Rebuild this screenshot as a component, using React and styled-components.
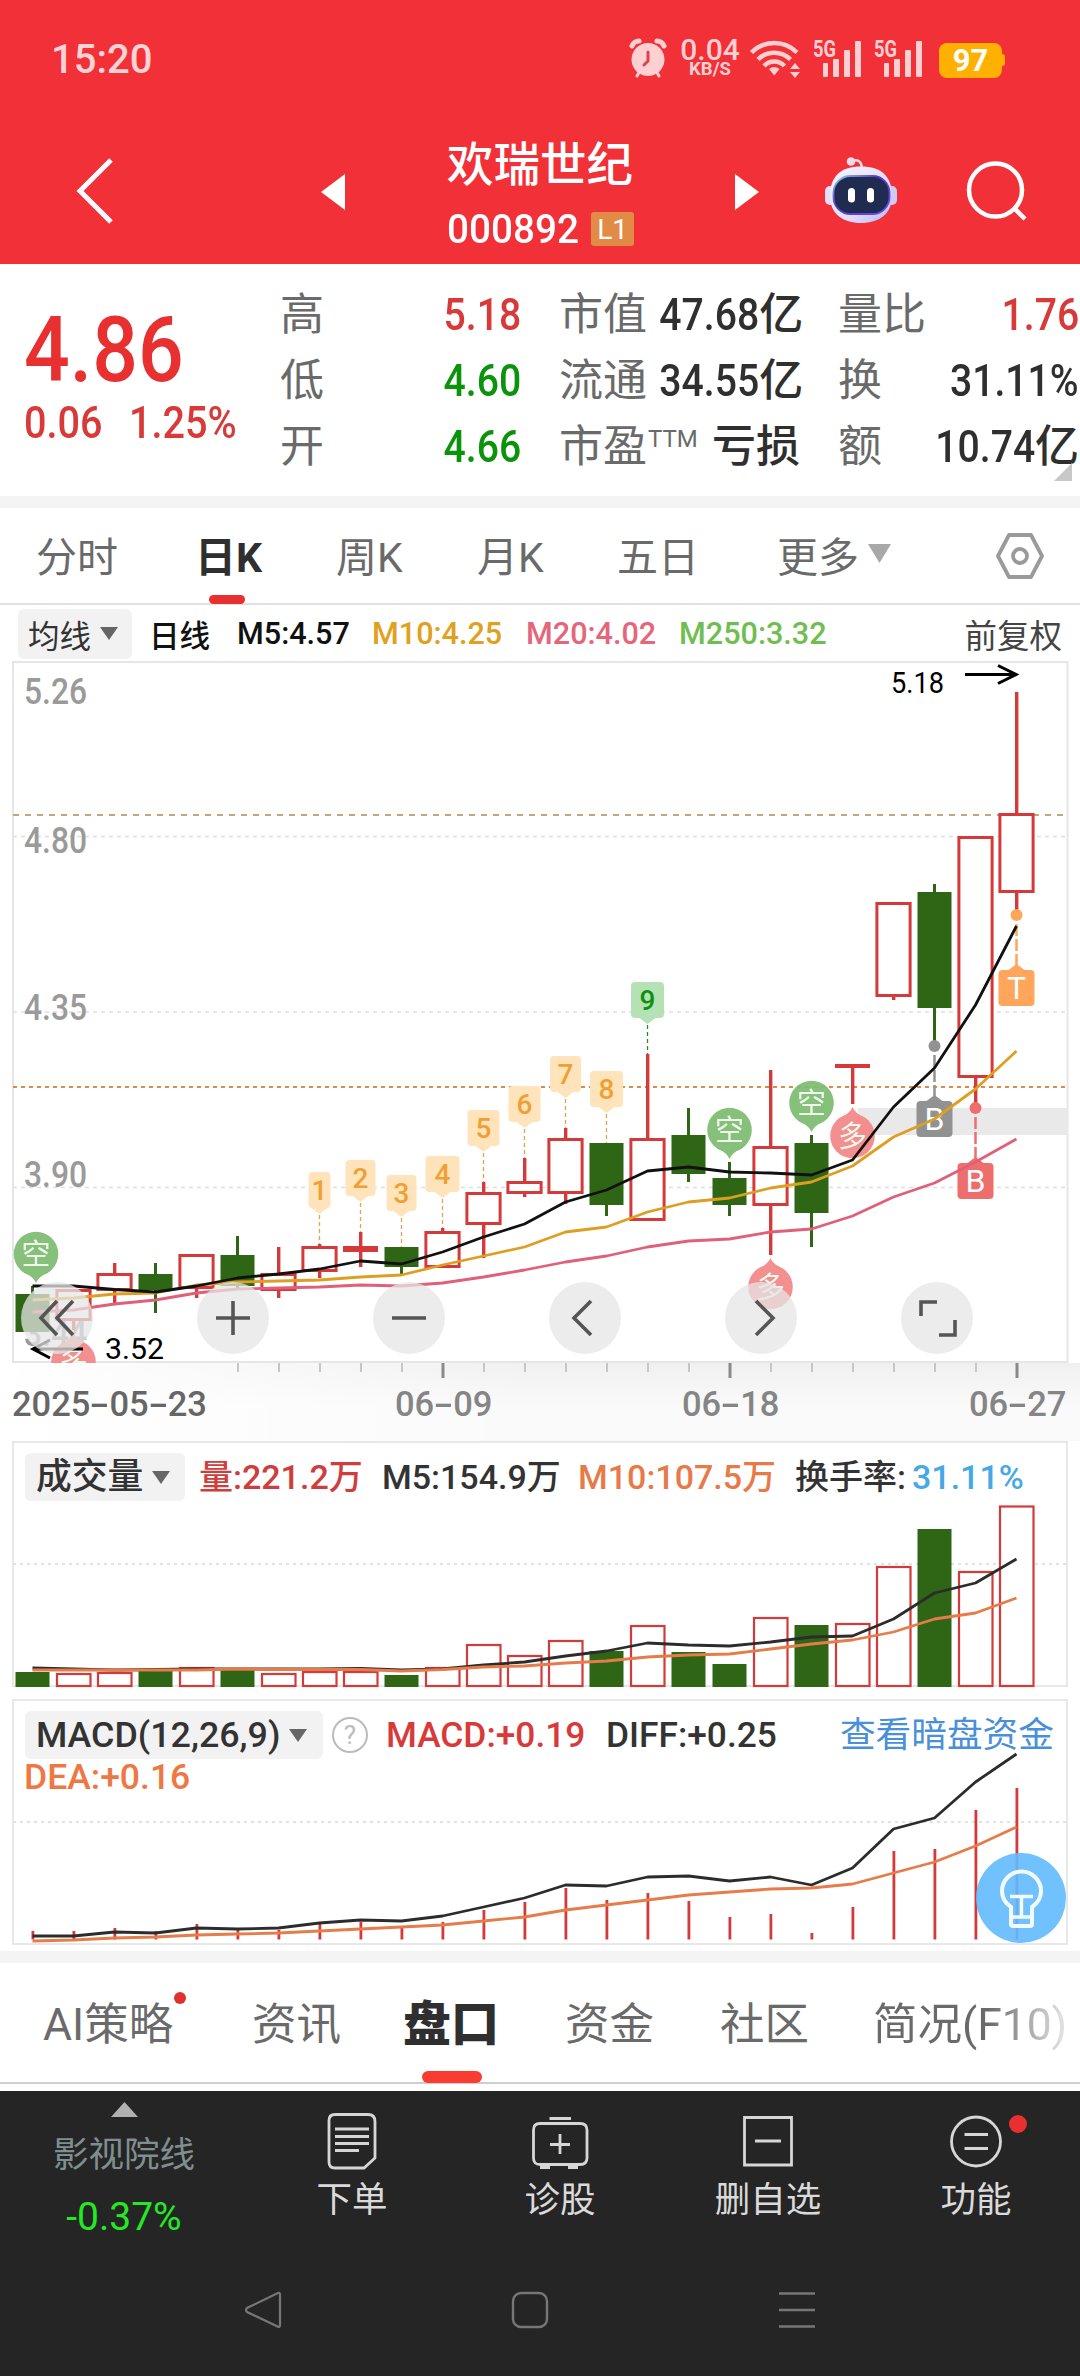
import React from 'react';
import styled, { createGlobalStyle } from 'styled-components';

const RED = '#d43a3a';
const GREEN = '#2f6615';

// x centre of the nth trading day, shared by the three charts
const dayX = i => 32.5 + 41 * i;

const toPoints = ys => ys.map((y, i) => `${dayX(i)},${y}`).join(' ');

// [up, high, top, bottom, low]
const candles = [
  [0, 1286, 1294, 1332, 1332],
  [1, 1289, 1289, 1321, 1330],
  [1, 1263, 1273, 1291, 1304],
  [0, 1263, 1274, 1290, 1313],
  [1, 1254, 1254, 1289, 1298],
  [0, 1236, 1255, 1286, 1288],
  [1, 1247, 1273, 1291, 1298],
  [1, 1244, 1246, 1272, 1278],
  [1, 1232, 1246, 1252, 1267],
  [0, 1247, 1247, 1267, 1274],
  [1, 1228, 1231, 1268, 1268],
  [1, 1182, 1192, 1225, 1258],
  [1, 1158, 1181, 1194, 1197],
  [1, 1128, 1138, 1194, 1204],
  [0, 1143, 1143, 1205, 1216],
  [1, 1054, 1138, 1221, 1221],
  [0, 1108, 1135, 1174, 1182],
  [0, 1162, 1178, 1205, 1216],
  [1, 1070, 1146, 1206, 1255],
  [0, 1135, 1143, 1213, 1247],
  [1, 1064, 1064, 1068, 1104],
  [1, 902, 902, 997, 1000],
  [0, 884, 892, 1008, 1046],
  [1, 836, 836, 1078, 1108],
  [1, 692, 813, 893, 915],
];

const ma5 = [1286, 1286, 1289.5, 1292, 1286, 1278, 1274, 1269, 1261, 1264, 1252, 1237, 1224, 1202, 1190, 1171, 1167, 1172, 1173, 1175, 1160, 1107, 1068, 1005, 926];
const ma10 = [1300, 1298, 1294, 1293, 1285, 1282, 1281, 1280, 1277, 1275, 1265, 1256, 1247, 1232, 1227, 1212, 1202, 1198, 1188, 1182, 1166, 1137, 1119, 1089, 1051];
const ma20 = [1312, 1310, 1304, 1300, 1293, 1289, 1288, 1287, 1285, 1286, 1283, 1277, 1270, 1262, 1256, 1247, 1241, 1239, 1232, 1229, 1216, 1197, 1183, 1162, 1139];

const volumes = [1672, 1673, 1672, 1671, 1667, 1670, 1673, 1671, 1671, 1675, 1667, 1644, 1655, 1640, 1651, 1625, 1652, 1664, 1617, 1625, 1623, 1566, 1529, 1571, 1505.5];
const volMa5 = [1668, 1669, 1670, 1669.5, 1669, 1669, 1669, 1669, 1668.5, 1670, 1669, 1665, 1662, 1656, 1651, 1643, 1645, 1646, 1642, 1637, 1636, 1619, 1593, 1583, 1559];
const volMa10 = [1670, 1670, 1670, 1670, 1670, 1669, 1669.5, 1669.5, 1669.5, 1671, 1669.5, 1667, 1666, 1663, 1661, 1657, 1655, 1654, 1649, 1644, 1640, 1632, 1619, 1613, 1598];

const macdBars = [1931, 1931, 1928, 1931, 1924, 1929, 1930, 1924, 1922, 1927, 1922, 1910, 1902, 1888, 1900, 1893, 1901, 1917, 1914, 1933, 1907, 1851, 1849, 1810, 1788];
const diffLine = [1936, 1936, 1932, 1933, 1928, 1929, 1928, 1923, 1920, 1921, 1916, 1907, 1898, 1885, 1886, 1877, 1876, 1881, 1877, 1885, 1868, 1829, 1818, 1782, 1754];
const deaLine = [1941, 1940, 1938, 1937, 1935, 1934, 1933, 1931, 1929, 1927, 1925, 1921, 1917, 1910, 1905, 1900, 1895, 1892, 1889, 1888, 1884, 1873, 1862, 1846, 1827];

// [day, label, box top, box width, line end]
const counts = [
  [7, '1', 1172, 22, 1244],
  [8, '2', 1160, 30, 1232],
  [9, '3', 1175, 30, 1247],
  [10, '4', 1156, 34, 1228],
  [11, '5', 1110, 32, 1182],
  [12, '6', 1086, 32, 1158],
  [13, '7', 1056, 31, 1128],
  [14, '8', 1071, 33, 1143],
  [15, '9', 982, 33, 1054],
];

const axisLabels = [
  ['5.26', 704],
  ['4.80', 853],
  ['4.35', 1020],
  ['3.90', 1187],
  ['3.44', 1346],
];

const quotes = [
  [
    { label: '高', value: '5.18', color: '#d83a3a' },
    { label: '低', value: '4.60', color: '#0b930b' },
    { label: '开', value: '4.66', color: '#0b930b' },
  ],
  [
    { label: '市值', value: '47.68', unit: '亿' },
    { label: '流通', value: '34.55', unit: '亿' },
    { label: '市盈', sup: 'TTM', unit: '亏损' },
  ],
  [
    { label: '量比', value: '1.76', color: '#d83a3a' },
    { label: '换', value: '31.11%' },
    { label: '额', value: '10.74', unit: '亿' },
  ],
];

const App = () => {
  return (
    <>
      <GlobalStyle />
      <Page>
        <Header>
          <StatusBar />
          <TitleBar />
        </Header>
        <QuoteBoard />
        <Band />
        <PeriodTabs />
        <AverageBar />
        <CandleSection />
        <DateAxis />
        <VolumePanel />
        <MacdPanel />
        <Band />
        <InfoTabs />
        <Dock />
        <SystemNav />
      </Page>
    </>
  );
};

export default App;

const Signal = () => (
  <svg width="48" height="40" viewBox="0 0 48 40">
    <SvgText x="0" y="18.5" size="23" weight="700" fill="#ffcfd1" textLength="23" lengthAdjust="spacingAndGlyphs">
      5G
    </SvgText>
    <g fill="#ffcfd1">
      <rect x="10" y="25" width="5" height="14" rx="1" />
      <rect x="20" y="21" width="6" height="18" rx="1" />
      <rect x="31" y="12" width="6" height="27" rx="1" />
      <rect x="42" y="3" width="6" height="36" rx="1" />
    </g>
  </svg>
);

const StatusBar = () => (
  <StatusWrap>
    <Clock>15:20</Clock>
    <StatusIcons>
      <svg width="38" height="40" viewBox="0 0 38 40">
        <g fill="none" stroke="#ffcfd1" strokeLinecap="round">
          <path d="M3 8 Q5 3 10 3" strokeWidth="5" />
          <path d="M35 8 Q33 3 28 3" strokeWidth="5" />
          <path d="M11 33 L8 38 M27 33 L30 38" strokeWidth="3" />
        </g>
        <circle cx="19" cy="21.5" r="16.5" fill="#ffcfd1" />
        <path d="M19 14 V23 L15 27" fill="none" stroke="#d8474d" strokeWidth="3" strokeLinecap="round" />
      </svg>
      <Rate>
        <RateValue>0.04</RateValue>
        <RateUnit>KB/S</RateUnit>
      </Rate>
      <Wifi width="52" height="40" viewBox="0 0 52 40">
        <g fill="none" stroke="#ffcfd1" strokeWidth="4.5">
          <path d="M1.5 14.5 A32 32 0 0 1 47 14.5" />
          <path d="M8 21.5 A23 23 0 0 1 40.5 21.5" />
          <path d="M14 28 A14 14 0 0 1 34.5 28" />
        </g>
        <path d="M19 31 Q24.2 27 29.5 31 L24.2 37.5 Z" fill="#ffcfd1" />
        <path d="M40 31 L45 25 L50 31 Z M40 34 L45 40 L50 34 Z" fill="#ffcfd1" />
      </Wifi>
      <Signal />
      <Signal />
      <Battery>97</Battery>
    </StatusIcons>
  </StatusWrap>
);

const TitleBar = () => (
  <TitleWrap>
    <svg width="40" height="66" viewBox="0 0 40 66">
      <path d="M35 2 L4 33 L35 64" fill="none" stroke="#fff" strokeWidth="5" />
    </svg>
    <Prev width="24" height="36" viewBox="0 0 24 36">
      <path d="M24 0 V36 L0 18 Z" fill="#fff" />
    </Prev>
    <StockTitle>
      <StockName>欢瑞世纪</StockName>
      <StockCode>
        <Narrow scale="0.955">000892</Narrow>
        <Level>L1</Level>
      </StockCode>
    </StockTitle>
    <Next width="24" height="36" viewBox="0 0 24 36">
      <path d="M0 0 V36 L24 18 Z" fill="#fff" />
    </Next>
    <Robot />
    <svg width="62" height="62" viewBox="0 0 62 62">
      <g fill="none" stroke="#fff" strokeWidth="4.5">
        <circle cx="29.5" cy="30" r="26.5" />
        <path d="M48 48 L59 59" />
      </g>
    </svg>
  </TitleWrap>
);

const Robot = () => (
  <RobotSvg width="72" height="68" viewBox="0 0 72 68">
    <defs>
      <linearGradient id="shell" x1="0" y1="0" x2="1" y2="1">
        <stop offset="0" stopColor="#f6f4ff" />
        <stop offset="0.6" stopColor="#e3defa" />
        <stop offset="1" stopColor="#b9b6ee" />
      </linearGradient>
      <linearGradient id="visor" x1="0" y1="0" x2="1" y2="1">
        <stop offset="0" stopColor="#8fd4e8" />
        <stop offset="0.4" stopColor="#5a36c8" />
        <stop offset="1" stopColor="#6b4be8" />
      </linearGradient>
    </defs>
    <path d="M27 5 Q36 2 37 12" fill="none" stroke="#f0dcea" strokeWidth="2.5" />
    <circle cx="26" cy="5.5" r="4.3" fill="#f3dbe6" />
    <rect x="0" y="30" width="10" height="19" rx="5" fill="#e4e0fa" />
    <rect x="62" y="30" width="10" height="19" rx="5" fill="#cfc9f5" />
    <path d="M36 10.5 C56 10.5 67 20 67 40 C67 58 54 67 36 67 C18 67 5 58 5 40 C5 20 16 10.5 36 10.5 Z" fill="url(#shell)" />
    <rect x="8.5" y="20" width="56" height="38" rx="17" fill="#1f2c50" stroke="url(#visor)" strokeWidth="1.8" />
    <rect x="23" y="32" width="7" height="14.5" rx="3.5" fill="#fff" />
    <rect x="42" y="32" width="7" height="14.5" rx="3.5" fill="#fff" />
  </RobotSvg>
);

const QuoteBoard = () => (
  <QuoteWrap>
    <PriceBox>
      <Price>
        <Narrow scale="0.885">4.86</Narrow>
      </Price>
      <Change>
        <ChangeValue>0.06</ChangeValue>
        <ChangeValue>1.25%</ChangeValue>
      </Change>
    </PriceBox>
    {quotes.map((col, i) => (
      <QuoteCol key={i}>
        {col.map(q => (
          <QuoteRow key={q.label}>
            <QuoteLabel>
              {q.label}
              {q.sup && <Sup>{q.sup}</Sup>}
            </QuoteLabel>
            <QuoteValue color={q.color}>
              {q.value && (
                <Narrow scale="0.89" origin="right">
                  {q.value}
                </Narrow>
              )}
              {q.unit}
            </QuoteValue>
          </QuoteRow>
        ))}
      </QuoteCol>
    ))}
    <Corner />
  </QuoteWrap>
);

const PeriodTabs = () => (
  <PeriodWrap>
    <Period>分时</Period>
    <Period active>日K</Period>
    <Period>周K</Period>
    <Period>月K</Period>
    <Period>五日</Period>
    <Period>
      更多
      <Caret width="23" height="19" viewBox="0 0 22 18">
        <path d="M0 0 H22 L11 18 Z" fill="#a8a8a8" />
      </Caret>
    </Period>
    <svg width="50" height="48" viewBox="0 0 50 48">
      <g fill="none" stroke="#9a9a9a" strokeWidth="3.8" strokeLinejoin="round">
        <path d="M3 24 L14 3 H36 L47 24 L36 45 H14 Z" />
        <circle cx="25" cy="24" r="7" />
      </g>
    </svg>
  </PeriodWrap>
);

const DownMark = () => (
  <Caret width="18" height="13" viewBox="0 0 18 13">
    <path d="M0 0 H18 L9 13 Z" fill="#666" />
  </Caret>
);

const AverageBar = () => (
  <AverageWrap>
    <AverageChip>
      均线
      <DownMark />
    </AverageChip>
    <Average width="88px" color="#111">日线</Average>
    <Average width="135px" color="#111">M5:4.57</Average>
    <Average width="154px" color="#e0a020">M10:4.25</Average>
    <Average width="153px" color="#e5667a">M20:4.02</Average>
    <Average width="144px" color="#6fbe50">M250:3.32</Average>
    <Adjust>前复权</Adjust>
  </AverageWrap>
);

const CountTag = ({ data }) => {
  const [day, label, top, w, end] = data;
  const x = dayX(day);
  const done = label === '9';
  const bottom = top + 36;
  return (
    <g>
      <line x1={x} x2={x} y1={bottom + 7} y2={end} stroke={done ? '#2a8a2a' : '#d9a84e'} strokeWidth="1.3" strokeDasharray="4 3" />
      <rect x={x - w / 2} y={top} width={w} height="36" rx="4" fill={done ? '#b5e2b5' : '#ffe3bb'} />
      <path d={`M${x - 8} ${bottom} H${x + 8} L${x} ${bottom + 6} Z`} fill={done ? '#b5e2b5' : '#ffe3bb'} />
      <SvgText x={x} y={top + 28} size="28" weight="500" anchor="middle" fill={done ? '#109010' : '#f0a032'}>
        {label}
      </SvgText>
    </g>
  );
};

const Bubble = ({ x, y, short }) => {
  const color = short ? '#80bd73' : '#f48a8a';
  const tip = short ? y + 29 : y - 29;
  const base = short ? y + 18 : y - 18;
  return (
    <g opacity="0.95">
      <circle cx={x} cy={y} r="22.3" fill={color} />
      <path d={`M${x - 12} ${base} Q${x - 2} ${(base + tip) / 2} ${x} ${tip} Q${x + 2} ${(base + tip) / 2} ${x + 12} ${base} Z`} fill={color} />
      <SvgText x={x} y={y + 11} size="29" anchor="middle" fill="#eef8ec">
        {short ? '空' : '多'}
      </SvgText>
    </g>
  );
};

const TradeMark = ({ x, from, top, label, color }) => (
  <g>
    <circle cx={x} cy={from} r="6" fill={color} />
    <line x1={x} x2={x} y1={from + 9} y2={top - 5} stroke={color} strokeWidth="2.5" strokeDasharray="12 3" />
    <rect x={x - 18} y={top} width="36" height="36" rx="4" fill={color} />
    <path d={`M${x - 8} ${top} H${x + 8} L${x} ${top - 6} Z`} fill={color} />
    <SvgText x={x} y={top + 29} size="32" anchor="middle" fill="#fff">
      {label}
    </SvgText>
  </g>
);

const Candle = ({ data, day }) => {
  const [up, high, top, bottom, low] = data;
  const x = dayX(day);
  const flat = bottom - top < 8;
  if (!up) {
    return (
      <g fill={GREEN}>
        <rect x={x - 1.5} y={high} width="3" height={low - high} />
        <rect x={x - 17} y={top} width="34" height={bottom - top} />
      </g>
    );
  }
  return (
    <g>
      <rect x={x - 1.5} y={high} width="3.4" height={top - high} fill={RED} />
      <rect x={x - 1.5} y={bottom} width="3.4" height={low - bottom} fill={RED} />
      {flat ? (
        <rect x={x - 17.5} y={top} width="35" height={bottom - top} fill={RED} />
      ) : (
        <rect x={x - 16.6} y={top + 1.5} width="33.2" height={bottom - top - 3} fill="#fff" stroke={RED} strokeWidth="3" />
      )}
    </g>
  );
};

const CandleSection = () => (
  <CandleWrap>
    <CandleSvg width="1080" height="705" viewBox="0 659 1080 705">
      <defs>
        <clipPath id="frame">
          <rect x="12" y="661" width="1057" height="702" />
        </clipPath>
      </defs>
      <rect x="13" y="662" width="1054.5" height="700" fill="#fff" stroke="#e6e6e6" strokeWidth="2" />
      <g clipPath="url(#frame)">
        <g stroke="#dedede" strokeWidth="1.3" strokeDasharray="4 4">
          <line x1="13" x2="1067" y1="836.5" y2="836.5" />
          <line x1="13" x2="1067" y1="1012" y2="1012" />
          <line x1="13" x2="1067" y1="1187.5" y2="1187.5" />
        </g>
        <rect x="858" y="1108" width="210" height="27" fill="#e9e9e9" />
        {axisLabels.map(([text, y]) => (
          <SvgText key={text} x="24" y={y} size="36" weight="500" fill="#9a9a9a" textLength="63" lengthAdjust="spacingAndGlyphs">
            {text}
          </SvgText>
        ))}
        <line x1="13" x2="1067" y1="815" y2="815" stroke="#bfa878" strokeWidth="2" strokeDasharray="6 6" />
        <line x1="13" x2="1067" y1="1087" y2="1087" stroke="#d98c4a" strokeWidth="2.2" strokeDasharray="4 4" />
        {candles.map((c, i) => (
          <Candle key={i} data={c} day={i} />
        ))}
        {counts.map(c => (
          <CountTag key={c[1]} data={c} />
        ))}
        <Bubble x={36} y={1254} short />
        <Bubble x={dayX(17)} y={1130} short />
        <Bubble x={dayX(19)} y={1103} short />
        <Bubble x={dayX(20)} y={1136} />
        <Bubble x={dayX(18)} y={1287} />
        <Bubble x={73.5} y={1362} />
        <TradeMark x={dayX(22)} from={1046} top={1101} label="B" color="#929292" />
        <TradeMark x={dayX(23)} from={1108} top={1163} label="B" color="#ee6e6e" />
        <TradeMark x={dayX(24)} from={915} top={970} label="T" color="#ffa55c" />
        <g fill="none" strokeWidth="2.8" strokeLinejoin="round">
          <polyline points={toPoints(ma20)} stroke="#e0607a" />
          <polyline points={toPoints(ma10)} stroke="#dd9f22" />
          <polyline points={toPoints(ma5)} stroke="#111" />
        </g>
        <g fill="none" stroke="#000" strokeWidth="3">
          <path d="M965 674.5 H1016 M998 665.5 L1016 674.5 L998 683.5" />
          <path d="M83 1349 H33 M50 1340 L33 1349 L50 1358" />
        </g>
        <SvgText x="891" y="693" size="30" fill="#000" textLength="53" lengthAdjust="spacingAndGlyphs">
          5.18
        </SvgText>
        <SvgText x="105" y="1359" size="30" fill="#000" textLength="59" lengthAdjust="spacingAndGlyphs">
          3.52
        </SvgText>
      </g>
    </CandleSvg>
    <Controls>
      <ControlButton>
        <path d="M36 19 L20 36 L36 53 M52 19 L36 36 L52 53" />
      </ControlButton>
      <ControlButton>
        <path d="M19 36 H53 M36 19 V53" />
      </ControlButton>
      <ControlButton>
        <path d="M19 36 H53" />
      </ControlButton>
      <ControlButton>
        <path d="M42 19 L25 36 L42 53" />
      </ControlButton>
      <ControlButton>
        <path d="M31 19 L48 36 L31 53" />
      </ControlButton>
      <ControlButton>
        <path d="M20 34 V20 H36 M54 38 V53 H38" />
      </ControlButton>
    </Controls>
  </CandleWrap>
);

const ControlButton = ({ children }) => (
  <Round>
    <svg width="72" height="72" viewBox="0 0 72 72" fill="none" stroke="#555" strokeWidth="3.6">
      {children}
    </svg>
  </Round>
);

const DateText = ({ children }) => (
  <>
    {children.split('-').map((part, i) => (
      <React.Fragment key={i}>
        {i > 0 && <Dash>-</Dash>}
        {part}
      </React.Fragment>
    ))}
  </>
);

const DateAxis = () => (
  <AxisWrap>
    <svg width="1080" height="18" viewBox="0 1363 1080 18">
      {candles.map((c, i) => {
        if (i < 5) return null;
        const major = i === 10 || i === 17 || i === 24;
        return <rect key={i} x={dayX(i) - (major ? 1 : 0.5)} y="1363" width={major ? 3 : 2} height={major ? 15 : 9} fill={major ? '#8a8a8a' : '#c6c6c6'} />;
      })}
    </svg>
    <Dates>
      <DateLabel width="383px" dark>
        <DateText>2025-05-23</DateText>
      </DateLabel>
      <DateLabel width="287px">
        <DateText>06-09</DateText>
      </DateLabel>
      <DateLabel width="287px">
        <DateText>06-18</DateText>
      </DateLabel>
      <DateLabel>
        <DateText>06-27</DateText>
      </DateLabel>
    </Dates>
  </AxisWrap>
);

const VolumePanel = () => (
  <Panel height="246px">
    <PanelHead size="34px">
      <Chip width="160px">
        成交量
        <DownMark />
      </Chip>
      <Figure width="183px" left="14px" color="#cf3d3d">量:221.2万</Figure>
      <Figure width="196px" color="#333">M5:154.9万</Figure>
      <Figure width="217px" color="#e67a48">M10:107.5万</Figure>
      <Figure width="117px" color="#333">换手率:</Figure>
      <Figure color="#46a9e6">31.11%</Figure>
    </PanelHead>
    <PanelSvg width="1080" height="246" viewBox="0 1441 1080 246">
      <line x1="13" x2="1067" y1="1564" y2="1564" stroke="#e2e2e2" strokeWidth="2" strokeDasharray="3 4" />
      {volumes.map((top, i) =>
        candles[i][0] ? (
          <rect key={i} x={dayX(i) - 16.5} y={top + 1} width="33.5" height={1686 - top - 1} fill="#fff" stroke={RED} strokeWidth="2.2" />
        ) : (
          <rect key={i} x={dayX(i) - 17} y={top} width="34" height={1687 - top} fill={GREEN} />
        )
      )}
      <g fill="none" strokeWidth="2.8" strokeLinejoin="round">
        <polyline points={toPoints(volMa5)} stroke="#2c2c2c" />
        <polyline points={toPoints(volMa10)} stroke="#e67c4a" />
      </g>
    </PanelSvg>
  </Panel>
);

const MacdPanel = () => (
  <Panel height="246px" top="12px" bottom="6px">
    <PanelHead size="35.3px">
      <Chip width="298px">
        MACD(12,26,9)
        <DownMark />
      </Chip>
      <Help>?</Help>
      <Figure width="220px" left="18px" color="#d83a3a">MACD:+0.19</Figure>
      <Figure color="#333">DIFF:+0.25</Figure>
      <DarkPool>查看暗盘资金</DarkPool>
    </PanelHead>
    <Dea>DEA:+0.16</Dea>
    <PanelSvg width="1080" height="246" viewBox="0 1699 1080 246">
      <line x1="13" x2="1067" y1="1822" y2="1822" stroke="#e2e2e2" strokeWidth="2" strokeDasharray="3 4" />
      {macdBars.map((top, i) => (
        <rect key={i} x={dayX(i) - 1} y={top} width="2.8" height={1939.5 - top} fill={RED} />
      ))}
      <g fill="none" strokeWidth="2.8" strokeLinejoin="round">
        <polyline points={toPoints(diffLine)} stroke="#2c2c2c" />
        <polyline points={toPoints(deaLine)} stroke="#e67c4a" />
      </g>
    </PanelSvg>
    <Bulb width="90" height="90" viewBox="0 0 90 90">
      <circle cx="45" cy="45" r="45" fill="#62baff" opacity="0.9" />
      <g fill="none" stroke="#f2fbff" strokeWidth="4" strokeLinejoin="round">
        <path d="M35 71 V54 Q26 48 26 38 A19.5 19.5 0 0 1 65 38 Q65 48 56 54 V71 Q56 73 54 73 H37 Q35 73 35 71 Z" />
        <path d="M34 43.5 H57 M45.5 43.5 V64 M35 64 H56" strokeWidth="3.4" />
      </g>
    </Bulb>
  </Panel>
);

const InfoTabs = () => (
  <InfoWrap>
    <Info width="209px">
      AI策略
      <TabDot />
    </Info>
    <Info width="151px">资讯</Info>
    <Info width="162px" active>盘口</Info>
    <Info width="155px">资金</Info>
    <Info width="153px">社区</Info>
    <FadedInfo>简况(F10)</FadedInfo>
  </InfoWrap>
);

const Dock = () => (
  <DockWrap>
    <Sector>
      <svg width="27" height="15" viewBox="0 0 27 15">
        <path d="M0 15 L13.5 0 L27 15 Z" fill="#b0b0b0" />
      </svg>
      <SectorName>影视院线</SectorName>
      <SectorChange>-0.37%</SectorChange>
    </Sector>
    <DockItem>
      <DockIcon>
        <path d="M11 2.5 H44 Q51 2.5 51 9.5 V46 L40 56 H11 Q5 56 5 50 V8.5 Q5 2.5 11 2.5 Z M11 17 H45 M11 24.5 H45 M11 31.5 H45 M11 38.5 H35" />
      </DockIcon>
      下单
    </DockItem>
    <DockItem>
      <DockIcon>
        <path d="M8 11.5 H48 Q55 11.5 55 18 V46 Q55 52.5 48 52.5 H8 Q1.5 52.5 1.5 46 V18 Q1.5 11.5 8 11.5 Z M17.5 6.5 H39 M28 22 V42 M18 32.5 H38" />
        <path d="M8 55 H18 M36 55 H46" strokeWidth="4" />
      </DockIcon>
      诊股
    </DockItem>
    <DockItem>
      <DockIcon>
        <path d="M4.5 5.5 H51.5 V53 H4.5 Z M15 29 H41" />
      </DockIcon>
      删自选
    </DockItem>
    <DockItem>
      <DockIcon>
        <circle cx="28" cy="29.5" r="24.5" />
        <path d="M16.5 22.5 H40 M16.5 36.5 H40" />
      </DockIcon>
      功能
      <DockDot />
    </DockItem>
  </DockWrap>
);

const SystemNav = () => (
  <NavWrap>
    <svg width="40" height="40" viewBox="0 0 40 40">
      <path d="M35 3 Q37 2 37 5 V35 Q37 38 34.5 36.5 L4 22 Q2 20 4 18 Z" fill="none" stroke="#777" strokeWidth="2.2" />
    </svg>
    <svg width="40" height="40" viewBox="0 0 40 40">
      <rect x="3" y="3" width="34" height="34" rx="8" fill="none" stroke="#777" strokeWidth="2.4" />
    </svg>
    <svg width="40" height="40" viewBox="0 0 40 40">
      <path d="M2 3.5 H38 M2 20 H38 M2 36.5 H38" stroke="#777" strokeWidth="2.6" />
    </svg>
  </NavWrap>
);

const DockIcon = ({ children }) => (
  <svg width="56" height="58" viewBox="0 0 56 58" fill="none" stroke="#d6d6d6" strokeWidth="2.8">
    {children}
  </svg>
);

const GlobalStyle = createGlobalStyle`
  * {
    box-sizing: border-box;
  }

  body {
    margin: 0;
    background: #fff;
    font-family: Roboto, 'Noto Sans CJK SC', sans-serif;
  }

  svg {
    display: block;
    flex-shrink: 0;
    overflow: visible;
  }
`;

const Page = styled.div`
  width: 1080px;
  height: 2376px;
  overflow: hidden;
  white-space: nowrap;
`;

const SvgText = styled.text`
  font-size: ${props => props.size}px;
  font-weight: ${props => props.weight || 400};
  text-anchor: ${props => props.anchor || 'start'};
`;

const Narrow = styled.span`
  display: inline-block;
  transform: scaleX(${props => props.scale});
  transform-origin: ${props => props.origin || 'left'} center;
`;

const Header = styled.header`
  height: 264px;
  background: #f13038;
  color: #fff;
`;

const StatusWrap = styled.div`
  display: flex;
  align-items: flex-start;
  justify-content: space-between;
  height: 118px;
  padding: 38px 75px 0 51px;
`;

const Clock = styled.div`
  font-size: 40px;
  font-weight: 500;
  line-height: 43px;
  color: #ffd3d5;
`;

const StatusIcons = styled.div`
  display: flex;
  align-items: center;
  gap: 13px;
`;

const Rate = styled.div`
  width: 60px;
  margin-right: -1px;
  color: #ffcfd1;
  text-align: center;
`;

const RateValue = styled.div`
  font-size: 30px;
  font-weight: 500;
  line-height: 22px;
`;

const RateUnit = styled.div`
  font-size: 18.5px;
  font-weight: 700;
  line-height: 17px;
`;

const Wifi = styled.svg`
  margin: 0 -2px 0 -2px;
`;

const Battery = styled.div`
  position: relative;
  width: 63px;
  height: 35px;
  margin: 4px 3px 0 4px;
  border-radius: 8px;
  background: #ffb000;
  color: #fff;
  font-size: 31px;
  font-weight: 700;
  line-height: 36px;
  text-align: center;

  &::after {
    content: '';
    position: absolute;
    top: 11px;
    right: -3px;
    width: 4px;
    height: 12px;
    border-radius: 0 3px 3px 0;
    background: #ffb000;
  }
`;

const TitleWrap = styled.div`
  display: flex;
  align-items: center;
  height: 146px;
  padding-left: 76px;
`;

const Prev = styled.svg`
  margin: 2px 102px 0 205px;
`;

const Next = styled.svg`
  margin: 2px 66px 0 101px;
`;

const RobotSvg = styled.svg`
  margin: -2px 69px 0 0;
`;

const StockTitle = styled.div`
  width: 187px;
  padding-top: 10px;
`;

const StockName = styled.div`
  font-size: 46.5px;
  font-weight: 500;
  line-height: 64px;
`;

const StockCode = styled.div`
  display: flex;
  align-items: center;
  height: 62px;
  margin-top: 1px;
  font-size: 40.5px;
  font-weight: 500;
`;

const Level = styled.span`
  width: 43px;
  height: 34px;
  margin-left: 6px;
  border-radius: 3px;
  background: #e28b47;
  font-size: 28px;
  font-weight: 400;
  line-height: 35px;
  text-align: center;
`;

const QuoteWrap = styled.section`
  position: relative;
  display: flex;
  height: 232px;
  padding-top: 18px;
`;

const PriceBox = styled.div`
  width: 280px;
  padding: 12px 0 0 24px;
  color: #e83030;
`;

const Price = styled.div`
  height: 106px;
  font-size: 91px;
  font-weight: 500;
  line-height: 112px;
`;

const Change = styled.div`
  display: flex;
  color: #d83a3a;
  font-size: 44px;
  font-weight: 500;
  line-height: 46px;
`;

const ChangeValue = styled.span`
  width: 105px;
  transform: scaleX(0.9);
  transform-origin: left center;
`;

const QuoteCol = styled.div`
  width: 241px;

  & + & {
    margin-left: 38px;
  }
`;

const QuoteRow = styled.div`
  display: flex;
  justify-content: space-between;
  height: 66px;
  line-height: 66px;
`;

const QuoteLabel = styled.span`
  display: flex;
  color: #6a6a6a;
  font-size: 44px;
`;

const Sup = styled.sup`
  margin-left: 1px;
  font-size: 24px;
  line-height: 50px;
`;

const QuoteValue = styled.span`
  color: ${props => props.color || '#2f2f2f'};
  font-size: 44px;
  font-weight: 500;
`;

const Corner = styled.i`
  position: absolute;
  right: 8px;
  bottom: 15px;
  width: 18px;
  height: 18px;
  background: #c8c8c8;
  clip-path: polygon(100% 0, 100% 100%, 0 100%);
`;

const Band = styled.div`
  height: 12px;
  background: #f4f4f4;
`;

const PeriodWrap = styled.nav`
  display: grid;
  grid-template-columns: 159px 141px 141px 140px 160px 218px 50px;
  align-items: center;
  height: 97px;
  padding-left: 36px;
  border-bottom: 2px solid #e0e0e0;
`;

const Period = styled.div`
  position: relative;
  display: flex;
  align-items: center;
  height: 95px;
  padding-bottom: 4px;
  color: ${props => (props.active ? '#2f2f2f' : '#6a6a6a')};
  font-size: 41px;
  font-weight: ${props => (props.active ? 700 : 400)};

  &::after {
    content: '';
    display: ${props => (props.active ? 'block' : 'none')};
    position: absolute;
    bottom: -1px;
    left: 14px;
    width: 36px;
    height: 9px;
    border-radius: 5px;
    background: #e83030;
  }
`;

const Caret = styled.svg`
  margin-left: 9px;
`;

const AverageWrap = styled.div`
  display: flex;
  align-items: center;
  height: 54px;
  padding: 3px 18px 0;
  font-size: 31.5px;
`;

const AverageChip = styled.div`
  display: flex;
  align-items: center;
  width: 114px;
  height: 50px;
  margin-right: 17px;
  padding-left: 10px;
  border-radius: 6px;
  background: #f2f2f2;
  color: #333;
`;

const Average = styled.span`
  width: ${props => props.width};
  color: ${props => props.color};
  font-size: 30.6px;
  font-weight: 500;
`;

const Adjust = styled.span`
  margin-left: auto;
  color: #444;
  font-size: 32.5px;
`;

const CandleWrap = styled.section`
  position: relative;
  height: 704px;
`;

const CandleSvg = styled.svg`
  display: block;
`;

const Controls = styled.div`
  position: absolute;
  left: 21px;
  bottom: 9px;
  display: flex;
  gap: 104px;
`;

const Round = styled.button`
  width: 72px;
  height: 72px;
  padding: 0;
  border: 0;
  border-radius: 50%;
  background: rgba(229, 229, 229, 0.75);
`;

const AxisWrap = styled.div`
  height: 78px;
  background: linear-gradient(90deg, #fff 0%, rgba(255, 255, 255, 0) 50%), linear-gradient(#f0f0f0, #fafafa 55%);
`;

const Dates = styled.div`
  display: flex;
  padding: 3px 0 0 12px;
`;

const DateLabel = styled.span`
  width: ${props => props.width || 'auto'};
  color: ${props => (props.dark ? '#666' : '#858585')};
  font-size: 34.5px;
  font-weight: 500;
  line-height: 40px;
`;

const Dash = styled.span`
  display: inline-block;
  width: 19px;
  text-align: center;
  transform: scaleX(1.7);
`;

const Panel = styled.section`
  position: relative;
  height: ${props => props.height};
  margin: ${props => props.top || 0} 12px ${props => props.bottom || 0};
  border: 2px solid #e8e8e8;
`;

const PanelHead = styled.div`
  position: relative;
  z-index: 1;
  display: flex;
  align-items: center;
  height: 48px;
  margin: 10px 12px 0 11px;
  font-size: ${props => props.size};
  line-height: 48px;
`;

const PanelSvg = styled.svg`
  position: absolute;
  top: -2px;
  left: -14px;
`;

const Chip = styled.div`
  display: flex;
  align-items: center;
  width: ${props => props.width};
  height: 48px;
  padding-left: 11px;
  border-radius: 6px;
  background: #f2f2f2;
  color: #333;
  font-size: 35.8px;
  font-weight: 500;
`;

const Figure = styled.span`
  width: ${props => props.width || 'auto'};
  margin-left: ${props => props.left || 0};
  color: ${props => props.color};
  font-weight: 500;
`;

const Help = styled.span`
  width: 36px;
  height: 36px;
  margin-left: 9px;
  border: 2.5px solid #bbb;
  border-radius: 50%;
  color: #bbb;
  font-size: 26px;
  line-height: 32px;
  text-align: center;
`;

const DarkPool = styled.span`
  margin-left: auto;
  color: #4a90d9;
  font-size: 35.7px;
`;

const Dea = styled.div`
  position: relative;
  z-index: 1;
  margin-left: 10px;
  color: #ee7844;
  font-size: 35.5px;
  font-weight: 500;
  line-height: 36px;
`;

const Bulb = styled.svg`
  position: absolute;
  right: 0;
  bottom: 0;
  z-index: 2;
`;

const InfoWrap = styled.nav`
  display: flex;
  height: 121px;
  margin-bottom: 7px;
  padding-left: 43px;
  border-bottom: 2px solid #cfcfcf;
`;

const Info = styled.div`
  position: relative;
  width: ${props => props.width};
  color: ${props => (props.active ? '#2f2f2f' : '#6a6a6a')};
  font-size: ${props => (props.active ? 48 : 44.5)}px;
  font-weight: ${props => (props.active ? 900 : 400)};
  line-height: 124px;

  &::after {
    content: '';
    display: ${props => (props.active ? 'block' : 'none')};
    position: absolute;
    top: 108px;
    left: 19px;
    width: 60px;
    height: 12px;
    border-radius: 6px;
    background: #fa3b32;
  }
`;

const FadedInfo = styled(Info)`
  color: transparent;
  background: linear-gradient(90deg, #6a6a6a 115px, #e4e4e4 192px);
  background-clip: text;
`;

const TabDot = styled.i`
  position: absolute;
  top: 29px;
  left: 131px;
  width: 12px;
  height: 12px;
  border-radius: 50%;
  background: #e03030;
`;

const DockWrap = styled.nav`
  display: flex;
  height: 160px;
  background: #252525;
`;

const Sector = styled.div`
  display: flex;
  flex-direction: column;
  align-items: center;
  width: 248px;
  padding-top: 11px;
`;

const SectorName = styled.div`
  margin-top: 14px;
  color: #7f8f8f;
  font-size: 35.5px;
  line-height: 48px;
`;

const SectorChange = styled.div`
  margin-top: 14px;
  color: #23ea23;
  font-size: 39px;
  line-height: 48px;
`;

const DockItem = styled.div`
  position: relative;
  display: flex;
  flex-direction: column;
  align-items: center;
  width: 208px;
  padding-top: 21px;
  color: #dadada;
  font-size: 35.5px;
  line-height: 60px;
`;

const DockDot = styled.i`
  position: absolute;
  top: 24px;
  right: 53px;
  width: 18px;
  height: 18px;
  border-radius: 50%;
  background: #e83030;
`;

const NavWrap = styled.div`
  display: flex;
  gap: 227px;
  height: 125px;
  padding: 39px 0 0 243px;
  background: #252525;
`;
